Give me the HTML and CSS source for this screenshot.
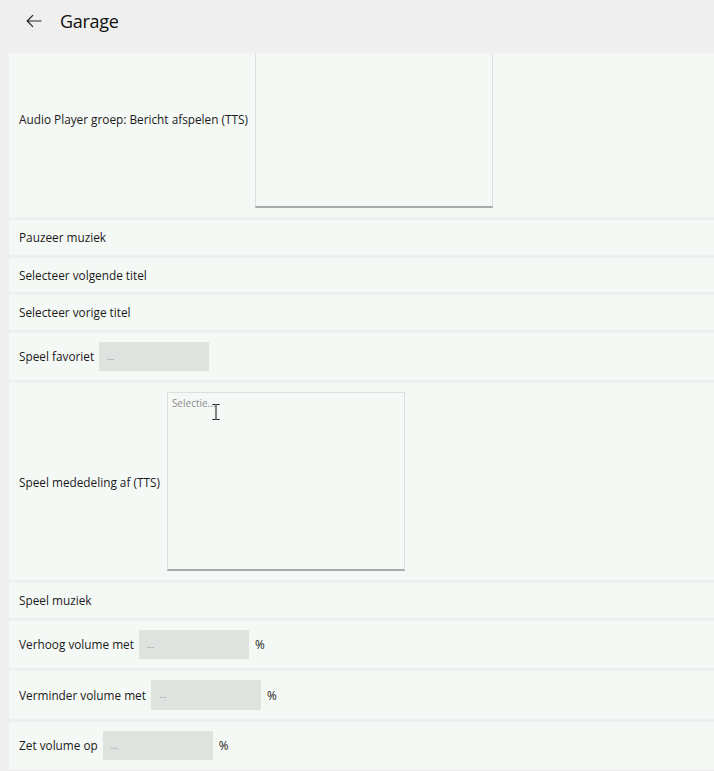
FILE: index.html
```html
<!DOCTYPE html>
<html lang="nl">
<head>
<meta charset="utf-8">
<title>Garage</title>
<link rel="stylesheet" href="styles.css">
</head>
<body>
<header class="header">
  <button class="back" aria-label="Terug">
    <svg width="16" height="14" viewBox="0 0 16 14"><path d="M15.5 7H1.2M7 1.2L1.2 7L7 12.8" fill="none" stroke="#222" stroke-width="1.2"/></svg>
  </button>
  <h1 class="title">Garage</h1>
</header>
<main class="content">
  <div class="list">
    <div class="row row-area">
      <span class="label label-area">Audio Player groep: Bericht afspelen (TTS)</span>
      <div class="area"></div>
    </div>
    <div class="row"><span class="label">Pauzeer muziek</span></div>
    <div class="row"><span class="label">Selecteer volgende titel</span></div>
    <div class="row"><span class="label">Selecteer vorige titel</span></div>
    <div class="row row-input">
      <span class="label">Speel favoriet</span>
      <div class="field">...</div>
    </div>
    <div class="row row-area">
      <span class="label label-area">Speel mededeling af (TTS)</span>
      <div class="area area-focus">
        <span class="placeholder">Selectie...</span>
        <svg class="ibeam" width="8" height="16" viewBox="0 0 8 16"><path d="M0.5 0.5H3.5M4.5 0.5H7.5M4 0.5V15.5M0.5 15.5H3.5M4.5 15.5H7.5" fill="none" stroke="#111" stroke-width="1"/></svg>
      </div>
    </div>
    <div class="row"><span class="label">Speel muziek</span></div>
    <div class="row row-input">
      <span class="label">Verhoog volume met</span>
      <div class="field">...</div>
      <span class="unit">%</span>
    </div>
    <div class="row row-input">
      <span class="label">Verminder volume met</span>
      <div class="field">...</div>
      <span class="unit">%</span>
    </div>
    <div class="row row-input">
      <span class="label">Zet volume op</span>
      <div class="field">...</div>
      <span class="unit">%</span>
    </div>
    <div class="row"><span class="label">&nbsp;</span></div>
  </div>
</main>
</body>
</html>
```
FILE: styles.css
```css
html, body {
  margin: 0;
  padding: 0;
}
body {
  background: #efefef;
  font-family: "Open Sans", "Noto Sans", sans-serif;
  color: #1a1a1a;
  height: 771px;
  overflow: hidden;
}
.header {
  height: 53px;
  display: flex;
  align-items: center;
  box-sizing: border-box;
  padding: 0 0 11px 26px;
}
.back {
  border: 0;
  background: none;
  padding: 0;
  margin: 0;
  width: 18px;
  height: 14px;
  display: flex;
  align-items: center;
}
.title {
  margin: 0 0 0 16px;
  font-size: 18px;
  font-weight: 500;
  color: #111;
  letter-spacing: -0.3px;
}
.content {
  height: 718px;
  overflow: hidden;
  padding-left: 9px;
}
.list {
  margin-top: -33px;
  display: flex;
  flex-direction: column;
  gap: 3px;
}
.row {
  background: #f5f9f6;
  display: flex;
  align-items: center;
  min-height: 34.5px;
  box-sizing: border-box;
  padding: 0 10px;
}
.row-input {
  padding-top: 9px;
  padding-bottom: 9px;
}
.row-area {
  padding-top: 9px;
  padding-bottom: 9px;
}
.label {
  font-size: 11.8px;
  line-height: 16px;
  white-space: nowrap;
  margin-right: 5px;
}
.label-area {
  margin-right: 7px;
}
.field {
  width: 110px;
  height: 29.5px;
  background: #dfe3e0;
  box-sizing: border-box;
  padding: 0 8px;
  font-size: 9px;
  color: #8a8d8b;
  display: flex;
  align-items: center;
}
.unit {
  font-size: 11.8px;
  margin-left: 6px;
}
.area {
  position: relative;
  width: 238px;
  height: 179px;
  box-sizing: border-box;
  background: #f5f9f6;
  border: 1px solid #dcdfdd;
  border-bottom: 2px solid #ababab;
}
.placeholder {
  position: absolute;
  left: 4px;
  top: 3px;
  font-size: 10px;
  color: #8c8c8c;
}
.ibeam {
  position: absolute;
  left: 44px;
  top: 11px;
}
```
